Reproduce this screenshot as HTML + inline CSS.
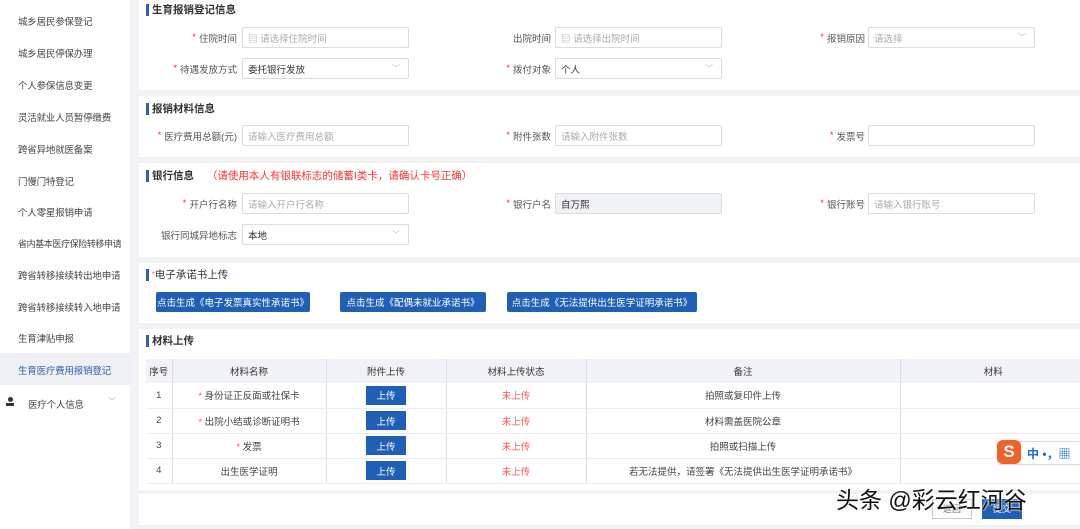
<!DOCTYPE html>
<html><head><meta charset="utf-8"><style>
*{margin:0;padding:0;box-sizing:border-box}
body{width:1080px;height:529px;overflow:hidden;background:#f0f2f5;font-family:"Liberation Sans","Noto Sans CJK SC",sans-serif;font-size:10px;color:#555;position:relative}
.a{position:absolute}
.side{left:0;top:0;width:130px;height:529px;background:#fff}
.si{position:absolute;left:18px;font-size:9.5px;color:#444;white-space:nowrap;letter-spacing:-0.2px}
.card{position:absolute;left:139px;width:941px;background:#fff}
.t{position:absolute;left:7px;font-size:10.5px;font-weight:bold;color:#333;border-left:3px solid #2c5fb0;padding-left:3px;line-height:12px;white-space:nowrap}
.lb{position:absolute;text-align:right;font-size:9.5px;color:#555;width:120px;height:21px;display:flex;align-items:center;justify-content:flex-end;white-space:nowrap}
.lb b{color:#e33;font-weight:normal;margin-right:3px}
.in{position:absolute;width:167px;height:21px;border:1px solid #d9dce3;border-radius:2px;background:#fff;font-size:9.5px;color:#aaa;padding-left:5px;display:flex;align-items:center;white-space:nowrap}
.in.v{color:#333}
.in .ar{position:absolute;right:8px;top:4px;color:#bbb;font-size:8px}
.btn{position:absolute;top:29px;height:20px;background:#1f5fb4;color:#fff;font-size:9.5px;display:flex;align-items:center;justify-content:center;border-radius:2px;white-space:nowrap}
table{border-collapse:collapse;position:absolute;left:7px;top:30px;width:940px;font-size:9.5px}
th{background:#f0f2f5;height:24px;font-weight:normal;color:#333;border-right:1px solid #dde}
td{height:25px;text-align:center;border-bottom:1px solid #eee;border-right:1px solid #dde;color:#444}
.up{display:inline-flex;align-items:center;justify-content:center;width:40px;height:19px;background:#1f5fb4;color:#fff;vertical-align:middle}
.red{color:#f55}
</style></head><body>
<div class="a side">
<div class="si" style="top:14px">城乡居民参保登记</div>
<div class="si" style="top:46px">城乡居民停保办理</div>
<div class="si" style="top:78px">个人参保信息变更</div>
<div class="si" style="top:110px">灵活就业人员暂停缴费</div>
<div class="si" style="top:142px">跨省异地就医备案</div>
<div class="si" style="top:174px">门慢门特登记</div>
<div class="si" style="top:205px">个人零星报销申请</div>
<div class="si" style="top:237px;font-size:9px;letter-spacing:-0.4px">省内基本医疗保险转移申请</div>
<div class="si" style="top:268px">跨省转移接续转出地申请</div>
<div class="si" style="top:300px">跨省转移接续转入地申请</div>
<div class="si" style="top:331px">生育津贴申报</div>
<div class="a" style="left:0;top:353px;width:130px;height:32px;background:#eef0f4"></div>
<div class="si" style="top:363px;color:#2c5fb0">生育医疗费用报销登记</div>
<div class="a" style="left:6px;top:397px;width:8px;height:9px"><div style="width:5px;height:5px;border-radius:50%;background:#333;margin:0 auto"></div><div style="width:8px;height:3px;background:#333;margin-top:1px"></div></div>
<div class="si" style="top:397px;left:28px">医疗个人信息</div>
<div class="a" style="left:108px;top:396px;color:#aaa;font-size:8px">﹀</div>
</div>

<div class="card" style="top:0;height:90px">
<div class="t" style="top:4px">生育报销登记信息</div>
<div class="lb" style="left:-22px;top:27px"><b>*</b>住院时间</div>
<div class="in" style="left:103px;top:27px">▤&nbsp;请选择住院时间</div>
<div class="lb" style="left:292px;top:27px">出院时间</div>
<div class="in" style="left:416px;top:27px">▤&nbsp;请选择出院时间</div>
<div class="lb" style="left:606px;top:27px"><b>*</b>报销原因</div>
<div class="in" style="left:729px;top:27px">请选择<span class="ar">﹀</span></div>
<div class="lb" style="left:-22px;top:58px"><b>*</b>待遇发放方式</div>
<div class="in v" style="left:103px;top:58px">委托银行发放<span class="ar">﹀</span></div>
<div class="lb" style="left:292px;top:58px"><b>*</b>拨付对象</div>
<div class="in v" style="left:416px;top:58px">个人<span class="ar">﹀</span></div>
</div>

<div class="card" style="top:96px;height:61px">
<div class="t" style="top:7px">报销材料信息</div>
<div class="lb" style="left:-22px;top:29px"><b>*</b>医疗费用总额(元)</div>
<div class="in" style="left:103px;top:29px">请输入医疗费用总额</div>
<div class="lb" style="left:292px;top:29px"><b>*</b>附件张数</div>
<div class="in" style="left:416px;top:29px">请输入附件张数</div>
<div class="lb" style="left:606px;top:29px"><b>*</b>发票号</div>
<div class="in" style="left:729px;top:29px"></div>
</div>

<div class="card" style="top:163px;height:94px">
<div class="t" style="top:7px">银行信息 <span style="color:#f33;font-weight:normal;margin-left:10px">（请使用本人有银联标志的储蓄I类卡，请确认卡号正确）</span></div>
<div class="lb" style="left:-22px;top:30px"><b>*</b>开户行名称</div>
<div class="in" style="left:103px;top:30px">请输入开户行名称</div>
<div class="lb" style="left:292px;top:30px"><b>*</b>银行户名</div>
<div class="in v" style="left:416px;top:30px;background:#f0f2f5">自万熙</div>
<div class="lb" style="left:606px;top:30px"><b>*</b>银行账号</div>
<div class="in" style="left:729px;top:30px">请输入银行账号</div>
<div class="lb" style="left:-22px;top:61px">银行同城异地标志</div>
<div class="in v" style="left:103px;top:61px">本地<span class="ar">﹀</span></div>
</div>

<div class="card" style="top:263px;height:60px">
<div class="t" style="top:6px;font-weight:normal"><span style="color:#e33;font-size:7px;vertical-align:top">*</span>电子承诺书上传</div>
<div class="btn" style="left:17px;width:154px">点击生成《电子发票真实性承诺书》</div>
<div class="btn" style="left:201px;width:146px">点击生成《配偶未就业承诺书》</div>
<div class="btn" style="left:368px;width:190px">点击生成《无法提供出生医学证明承诺书》</div>
</div>

<div class="card" style="top:329px;height:161px">
<div class="t" style="top:6px">材料上传</div>
<table>
<tr><th style="width:26px">序号</th><th style="width:154px">材料名称</th><th style="width:120px">附件上传</th><th style="width:140px">材料上传状态</th><th style="width:314px">备注</th><th style="border-right:none">材料</th></tr>
<tr><td>1</td><td><span class="red">* </span>身份证正反面或社保卡</td><td><span class="up">上传</span></td><td class="red">未上传</td><td>拍照或复印件上传</td><td style="border-right:none"></td></tr>
<tr><td>2</td><td><span class="red">* </span>出院小结或诊断证明书</td><td><span class="up">上传</span></td><td class="red">未上传</td><td>材料需盖医院公章</td><td style="border-right:none"></td></tr>
<tr><td>3</td><td><span class="red">* </span>发票</td><td><span class="up">上传</span></td><td class="red">未上传</td><td>拍照或扫描上传</td><td style="border-right:none"></td></tr>
<tr><td>4</td><td>出生医学证明</td><td><span class="up">上传</span></td><td class="red">未上传</td><td>若无法提供，请签署《无法提供出生医学证明承诺书》</td><td style="border-right:none"></td></tr>
</table>
</div>

<div class="card" style="top:494px;height:31px">
<div class="a" style="left:793px;top:5px;width:40px;height:20px;border:1px solid #ccc;font-size:9px;text-align:center;line-height:18px;color:#666">返回</div>
<div class="a" style="left:843px;top:5px;width:40px;height:20px;background:#1f5fb4;color:#fff;font-size:9px;text-align:center;line-height:20px">提交</div>
</div>

<div class="a" style="left:997px;top:441px;width:90px;height:24px;background:#fff;border:1px solid #cde;border-radius:3px"></div>
<div class="a" style="left:997px;top:440px;width:24px;height:24px;background:#f0622a;border-radius:6px;color:#fff;font-weight:bold;font-size:17px;text-align:center;line-height:24px">S</div>
<div class="a" style="left:1027px;top:445px;color:#1a6fd0;font-size:12px;font-weight:bold">中 •，▦</div>
<div class="a" style="left:836px;top:481px;font-size:23px;color:#111;text-shadow:0 0 2px #fff,0 0 2px #fff;white-space:nowrap">头条 @彩云红河谷</div>
</body></html>
